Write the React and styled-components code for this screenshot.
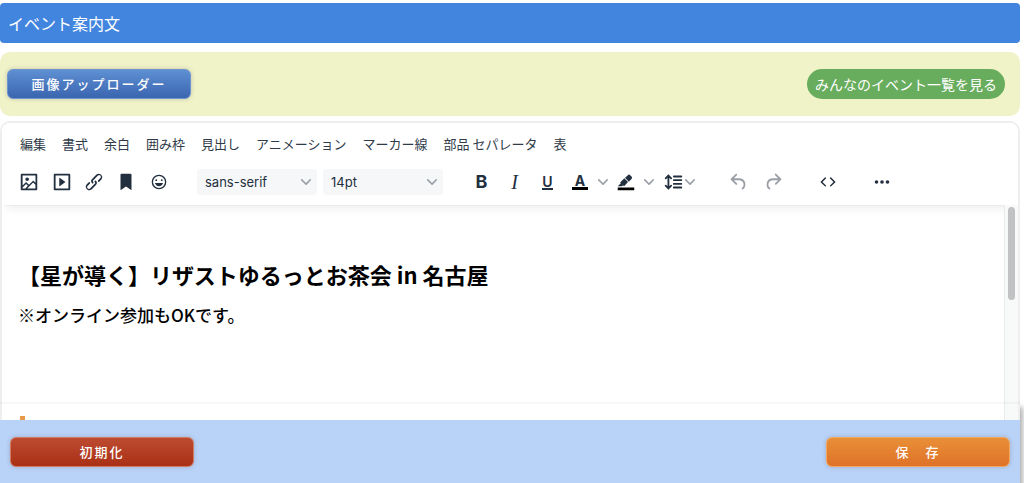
import React, { useState } from 'react';
import styled, { createGlobalStyle } from 'styled-components';

const GlobalStyle = createGlobalStyle`
    * {
        box-sizing: border-box;
    }
    body {
        margin: 0;
        background: #fff;
        font-family: "Noto Sans CJK JP", sans-serif;
    }
    button, select {
        font-family: inherit;
        margin: 0;
    }
`;

const Page = styled.main`
    display: flex;
    flex-direction: column;
    height: 100vh;
    padding: 3px 4px 0 0;
    overflow: hidden;
`;

const Title = styled.h1`
    flex: none;
    margin: 0 0 9px;
    padding: 0 8px;
    border-radius: 4px;
    background: #4285de;
    color: #fff;
    font-size: 16px;
    font-weight: 400;
    line-height: 40px;
`;

const Panel = styled.section`
    flex: none;
    display: flex;
    align-items: center;
    justify-content: space-between;
    margin-bottom: 5px;
    padding: 17px 15px 17px 7px;
    border-radius: 10px;
    background: #f0f3c7;
`;

const tones = {
    blue: { top: '#5f8fd3', bottom: '#3a65b0', edge: '#6f94cf' },
    red: { top: '#bd4b30', bottom: '#a93015', edge: '#cf7c66' },
    orange: { top: '#e98f38', bottom: '#df7228', edge: '#f0a862' },
};

const Button = styled.button`
    width: 184px;
    height: 30px;
    padding: 0;
    border: 1px solid ${props => tones[props.$tone].edge};
    border-radius: 6px;
    background: linear-gradient(${props => tones[props.$tone].top}, ${props => tones[props.$tone].bottom});
    box-shadow: 0 0 4px rgba(120, 120, 120, 0.4);
    color: #fff;
    font-size: 13px;
    font-weight: 500;
    letter-spacing: 2px;
    line-height: 26px;
    white-space: pre;
    cursor: pointer;
`;

const PillLink = styled.a`
    padding: 0 8px;
    border-radius: 15px;
    background: #68ad5d;
    color: #fff;
    font-size: 14px;
    line-height: 30px;
    text-decoration: none;
`;

const Editor = styled.section`
    flex: 1;
    min-height: 0;
    display: flex;
    flex-direction: column;
    border: 2px solid #eee;
    border-bottom: none;
    border-radius: 10px 10px 0 0;
    overflow: hidden;
`;

const EditorHeader = styled.header`
    position: relative;
    z-index: 1;
    flex: none;
    padding-bottom: 6px;
    background: #fff;
    box-shadow: 0 2px 2px -2px rgba(34, 47, 62, 0.1), 0 8px 8px -4px rgba(34, 47, 62, 0.07);
`;

const MenuBar = styled.nav`
    display: flex;
    align-items: center;
    gap: 16px;
    height: 42px;
    padding-left: 18px;
`;

const MenuButton = styled.button`
    padding: 0;
    border: none;
    background: none;
    color: #2f3b49;
    font-size: 13px;
    line-height: 20px;
    white-space: nowrap;
    cursor: pointer;
`;

const Toolbar = styled.div`
    display: flex;
    align-items: center;
    gap: 22px;
    height: 34px;
    padding-left: 11px;
`;

const Group = styled.div`
    display: flex;
    align-items: center;
    flex: none;
    gap: ${props => props.$gap || 0}px;
    width: ${props => props.$width ? `${props.$width}px` : 'auto'};
`;

const ToolButton = styled.button`
    display: flex;
    flex: 1 0 auto;
    align-items: center;
    justify-content: center;
    gap: 1px;
    width: ${props => props.$width || 32}px;
    height: 28px;
    padding: 0;
    border: none;
    background: none;
    color: ${props => props.disabled ? '#9a9fa7' : '#222f3e'};
    cursor: ${props => props.disabled ? 'default' : 'pointer'};
`;

const Letter = styled.span`
    display: block;
    font-family: ${props => props.$serif ? '"Liberation Serif", serif' : 'Inter, sans-serif'};
    font-size: ${props => props.$size || 18}px;
    font-style: ${props => props.$serif ? 'italic' : 'normal'};
    font-weight: ${props => props.$weight || 400};
    line-height: 20px;
`;

const BarLetter = styled(Letter)`
    padding: 0 ${props => props.$pad}px;
    border-bottom: ${props => props.$bar}px solid ${props => props.$bar > 2 ? '#000' : '#222f3e'};
    line-height: 13px;
`;

const SelectBox = styled.label`
    position: relative;
    display: block;
    width: 120px;

    svg {
        position: absolute;
        top: 8px;
        right: 6px;
        pointer-events: none;
    }
`;

const Select = styled.select`
    display: block;
    width: 100%;
    height: 26px;
    padding: 0 20px 0 8px;
    border: none;
    border-radius: 3px;
    background: #f6f7f9;
    color: #222f3e;
    font-family: Inter, sans-serif;
    font-size: 13px;
    appearance: none;
`;

const EditorBody = styled.div`
    flex: 1;
    min-height: 0;
    display: flex;
`;

const Content = styled.article`
    flex: 1;
    min-width: 0;
    padding: 53px 16px 0;
    overflow: hidden;
    outline: none;
    color: #000;
`;

const Heading = styled.h2`
    margin: 0 0 11px;
    font-size: 22px;
    font-weight: 700;
    line-height: 32px;
`;

const Text = styled.p`
    margin: 0 0 87px;
    font-size: 17px;
    font-weight: 500;
    line-height: 28px;
`;

const AccentBlock = styled.div`
    height: 48px;
    margin-left: 2px;
    border-left: 5px solid #e8994a;
`;

const Track = styled.div`
    position: relative;
    z-index: 2;
    flex: none;
    width: 14px;
    padding: 2px 3px;
    border-left: 1px solid #e9ebeb;
    background: #f8f9f9;
`;

const Thumb = styled.div`
    height: 93px;
    border-radius: 4px;
    background: #c1c2c3;
`;

const Dock = styled.div`
    position: fixed;
    z-index: 3;
    right: 4px;
    bottom: 0;
    left: 0;
    padding-top: 16px;
    border-top: 2px solid rgba(0, 0, 0, 0.03);
    box-shadow: 3px 5px 5px rgba(0, 0, 0, 0.3);
`;

const DockBar = styled.footer`
    display: flex;
    justify-content: space-between;
    padding: 17px 10px 16px;
    background: #b9d2f8;
`;

const paths = {
    image: 'm5 15.7 3.3-3.2c.3-.3.7-.3 1 0L12 15l4.1-4c.3-.4.8-.4 1 0l2 1.9V5H5v10.7ZM5 18V19h3l2.8-2.9-2-2L5 17.9Zm14-3-2.5-2.4-6.4 6.5H19v-4ZM4 3h16c.6 0 1 .4 1 1v16c0 .6-.4 1-1 1H4a1 1 0 0 1-1-1V4c0-.6.4-1 1-1Zm6 8a2 2 0 1 0 0-4 2 2 0 0 0 0 4Z',
    embed: 'M4 3h16c.6 0 1 .4 1 1v16c0 .6-.4 1-1 1H4a1 1 0 0 1-1-1V4c0-.6.4-1 1-1Zm1 2v14h14V5H5Zm4.8 2.6 5.6 4a.5.5 0 0 1 0 .8l-5.6 4A.5.5 0 0 1 9 16V8a.5.5 0 0 1 .8-.4Z',
    link: 'M6.2 12.3a1 1 0 0 1 1.4 1.4l-2 2a2 2 0 1 0 2.6 2.8l4.8-4.8a1 1 0 0 0 0-1.4 1 1 0 1 1 1.4-1.3 2.9 2.9 0 0 1 0 4L9.6 20a3.9 3.9 0 0 1-5.5-5.5l2-2Zm11.6-.6a1 1 0 0 1-1.4-1.4l2-2a2 2 0 1 0-2.6-2.8L11 10.3a1 1 0 0 0 0 1.4A1 1 0 1 1 9.6 13a2.9 2.9 0 0 1 0-4L14.4 4a3.9 3.9 0 0 1 5.5 5.5l-2 2Z',
    bookmark: 'M6 4v17l6-4 6 4V4c0-.6-.4-1-1-1H7a1 1 0 0 0-1 1Z',
    emoji: 'M9 11c.6 0 1-.4 1-1s-.4-1-1-1a1 1 0 0 0-1 1c0 .6.4 1 1 1Zm6 0c.6 0 1-.4 1-1s-.4-1-1-1a1 1 0 0 0-1 1c0 .6.4 1 1 1Zm-3 5.5c2.1 0 4-1.5 4.4-3.5H7.6c.5 2 2.3 3.5 4.4 3.5ZM12 4a8 8 0 1 0 0 16 8 8 0 0 0 0-16Zm0 14.5a6.5 6.5 0 1 1 0-13 6.5 6.5 0 0 1 0 13Z',
    marker: 'M7.7 16.7H3l3.3-3.3-.7-.8L10.2 8l4 4.1-4 4.2c-.2.2-.6.2-.8 0l-.6-.7-1.1 1.1zm5-7.5L11 7.4l3-2.9a2 2 0 0 1 2.6 0L18 6c.7.7.7 2 0 2.7l-2.9 2.9-1.8-1.8-.5-.6',
    lineHeight: 'M21 5a1 1 0 0 1 .1 2H13a1 1 0 0 1-.1-2H21zm0 4a1 1 0 0 1 .1 2H13a1 1 0 0 1-.1-2H21zm0 4a1 1 0 0 1 .1 2H13a1 1 0 0 1-.1-2H21zm0 4a1 1 0 0 1 .1 2H13a1 1 0 0 1-.1-2H21zM7 3.6l3.7 3.7a1 1 0 0 1-1.3 1.5h-.1L8 7.3v9.2l1.3-1.3a1 1 0 0 1 1.3 0h.1c.4.4.4 1 0 1.3v.1L7 20.4l-3.7-3.7a1 1 0 0 1 1.3-1.5h.1L6 16.7V7.4L4.7 8.7a1 1 0 0 1-1.3 0h-.1a1 1 0 0 1 0-1.3v-.1L7 3.6z',
    undo: 'M6.4 8H12c3.7 0 6.2 2 6.8 5.1.6 2.7-.4 5.6-2.3 6.8a1 1 0 0 1-1-1.8c1.1-.6 1.8-2.7 1.4-4.6-.5-2.1-2.1-3.5-4.9-3.5H6.4l3.3 3.3a1 1 0 1 1-1.4 1.4l-5-5a1 1 0 0 1 0-1.4l5-5a1 1 0 0 1 1.4 1.4L6.4 8Z',
    redo: 'M17.6 10H12c-2.8 0-4.4 1.4-4.9 3.5-.4 2 .3 4 1.4 4.6a1 1 0 1 1-1 1.8c-2-1.2-2.9-4.1-2.3-6.8.6-3 3-5.1 6.8-5.1h5.6l-3.3-3.3a1 1 0 1 1 1.4-1.4l5 5a1 1 0 0 1 0 1.4l-5 5a1 1 0 0 1-1.4-1.4l3.3-3.3Z',
    code: 'M9.8 15.7c.3.3.3.8 0 1-.3.4-.9.4-1.2 0l-4.4-4.1a.8.8 0 0 1 0-1.2l4.4-4.2c.3-.3.9-.3 1.2 0 .3.3.3.8 0 1.1L6 12l3.8 3.7ZM14.2 15.7c-.3.3-.3.8 0 1 .4.4.9.4 1.2 0l4.4-4.1c.3-.3.3-.9 0-1.2l-4.4-4.2a.8.8 0 0 0-1.2 0c-.3.3-.3.8 0 1.1L18 12l-3.8 3.7Z',
    more: 'M6 10a2 2 0 1 0 0 4 2 2 0 0 0 0-4Zm12 0a2 2 0 1 0 0 4 2 2 0 0 0 0-4Zm-6 0a2 2 0 1 0 0 4 2 2 0 0 0 0-4Z',
};

const Icon = ({ name, children }) => (
    <svg width="22" height="22" viewBox="0 0 24 24" fill="currentColor" aria-hidden="true">
        <path d={paths[name]} />
        {children}
    </svg>
);

const Chevron = () => (
    <svg width="10" height="10" viewBox="0 0 10 10" fill="#9a9fa7" aria-hidden="true">
        <path d="M8.7 2.2c.3-.3.8-.3 1 0 .4.4.4.9 0 1.2L5.7 7.8c-.3.3-.9.3-1.2 0L.2 3.4a.8.8 0 0 1 0-1.2c.3-.3.8-.3 1.1 0L5 6l3.7-3.8Z" />
    </svg>
);

const menus = ['編集', '書式', '余白', '囲み枠', '見出し', 'アニメーション', 'マーカー線', '部品 セパレータ', '表'];

const inserts = [
    ['image', '画像'],
    ['embed', '動画'],
    ['link', 'リンク'],
    ['bookmark', 'アンカー'],
    ['emoji', '絵文字'],
];

function EditorToolbar() {
    const [font, setFont] = useState('sans-serif');
    const [size, setSize] = useState('14pt');

    return (
        <Toolbar role="toolbar">
            <Group $width={162}>
                {inserts.map(([name, label]) => (
                    <ToolButton key={name} type="button" aria-label={label}><Icon name={name} /></ToolButton>
                ))}
            </Group>
            <Group $gap={6}>
                <SelectBox>
                    <Select aria-label="フォント" value={font} onChange={e => setFont(e.target.value)}>
                        <option>sans-serif</option>
                        <option>serif</option>
                    </Select>
                    <Chevron />
                </SelectBox>
                <SelectBox>
                    <Select aria-label="文字サイズ" value={size} onChange={e => setSize(e.target.value)}>
                        <option>12pt</option>
                        <option>14pt</option>
                        <option>18pt</option>
                    </Select>
                    <Chevron />
                </SelectBox>
            </Group>
            <Group>
                <ToolButton type="button" $width={33} aria-label="太字"><Letter $weight={700}>B</Letter></ToolButton>
                <ToolButton type="button" $width={33} aria-label="斜体"><Letter $serif $size={20}>I</Letter></ToolButton>
                <ToolButton type="button" $width={33} aria-label="下線"><BarLetter $size={14} $weight={600} $pad={0} $bar={2}>U</BarLetter></ToolButton>
                <ToolButton type="button" aria-label="文字色"><BarLetter $size={14} $weight={700} $pad={3} $bar={3}>A</BarLetter></ToolButton>
                <ToolButton type="button" $width={14} aria-label="文字色を選ぶ"><Chevron /></ToolButton>
                <ToolButton type="button" aria-label="背景色">
                    <Icon name="marker"><path d="M3 18h18v3H3z" fill="#000" /></Icon>
                </ToolButton>
                <ToolButton type="button" $width={14} aria-label="背景色を選ぶ"><Chevron /></ToolButton>
                <ToolButton type="button" $width={44} aria-label="行の高さ"><Icon name="lineHeight" /><Chevron /></ToolButton>
            </Group>
            <Group>
                <ToolButton type="button" $width={34} aria-label="元に戻す" disabled><Icon name="undo" /></ToolButton>
                <ToolButton type="button" $width={34} aria-label="やり直す" disabled><Icon name="redo" /></ToolButton>
            </Group>
            <Group>
                <ToolButton type="button" aria-label="ソースコード"><Icon name="code" /></ToolButton>
            </Group>
            <Group>
                <ToolButton type="button" aria-label="その他"><Icon name="more" /></ToolButton>
            </Group>
        </Toolbar>
    );
}

function App() {
    return (
        <>
            <GlobalStyle />
            <Page>
                <Title>イベント案内文</Title>
                <Panel>
                    <Button type="button" $tone="blue">画像アップローダー</Button>
                    <PillLink href="#events">みんなのイベント一覧を見る</PillLink>
                </Panel>
                <Editor>
                    <EditorHeader>
                        <MenuBar>
                            {menus.map(menu => <MenuButton key={menu} type="button">{menu}</MenuButton>)}
                        </MenuBar>
                        <EditorToolbar />
                    </EditorHeader>
                    <EditorBody>
                        <Content contentEditable suppressContentEditableWarning spellCheck={false} aria-label="本文">
                            <Heading>【星が導く】リザストゆるっとお茶会 in 名古屋</Heading>
                            <Text>※オンライン参加もOKです。</Text>
                            <AccentBlock />
                        </Content>
                        <Track><Thumb /></Track>
                    </EditorBody>
                </Editor>
                <Dock>
                    <DockBar>
                        <Button type="button" $tone="red">初期化</Button>
                        <Button type="button" $tone="orange">保　存</Button>
                    </DockBar>
                </Dock>
            </Page>
        </>
    );
}

export default App;
